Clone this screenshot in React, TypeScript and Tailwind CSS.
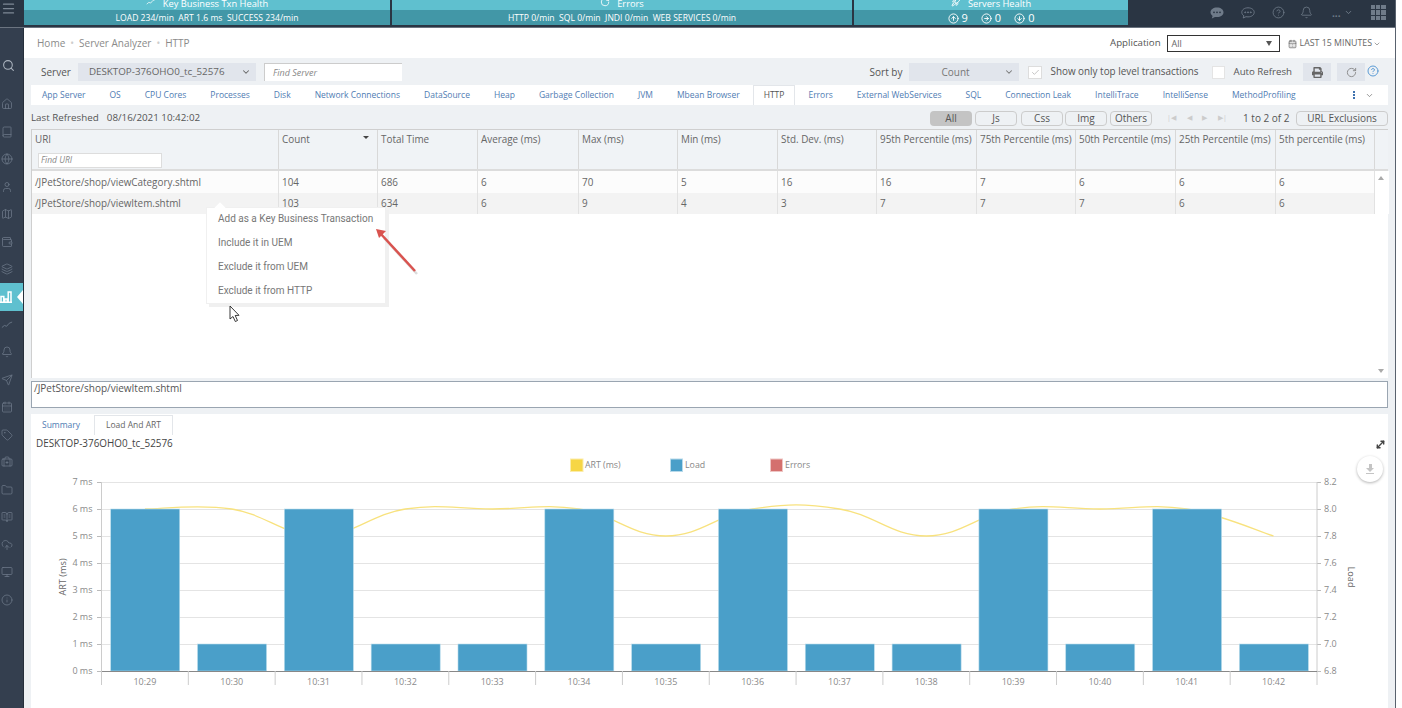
import {
  Search, House, Book, Globe, User, Map, Wallet, Layers, Bell, Send, CalendarDays, Tag,
  BriefcaseMedical, Folder, BookOpenText, CloudUpload, Monitor, Info, CircleHelp, ChevronDown,
  CircleArrowUp, CircleArrowRight, CircleArrowDown, Rocket, RotateCw, Check,
  MoveDiagonal, Menu,
} from "lucide-react";
import { FaPrint } from "react-icons/fa";

const tabs = [
  "App Server", "OS", "CPU Cores", "Processes", "Disk", "Network Connections", "DataSource", "Heap",
  "Garbage Collection", "JVM", "Mbean Browser", "HTTP", "Errors", "External WebServices", "SQL",
  "Connection Leak", "IntelliTrace", "IntelliSense", "MethodProfiling",
];

const columns = [
  "URI", "Count", "Total Time", "Average (ms)", "Max (ms)", "Min (ms)", "Std. Dev. (ms)", "95th Percentile (ms)",
  "75th Percentile (ms)", "50th Percentile (ms)", "25th Percentile (ms)", "5th percentile (ms)",
];

const rows = [
  ["/JPetStore/shop/viewCategory.shtml", "104", "686", "6", "70", "5", "16", "16", "7", "6", "6", "6"],
  ["/JPetStore/shop/viewItem.shtml", "103", "634", "6", "9", "4", "3", "7", "7", "7", "6", "6"],
];

const gridCols = "grid grid-cols-[247px_99px_100px_101px_99px_100px_99px_100px_99px_100px_100px_99px_14px]";

const times = ["10:29", "10:30", "10:31", "10:32", "10:33", "10:34", "10:35", "10:36", "10:37", "10:38", "10:39", "10:40", "10:41", "10:42"];
const load = [6, 1, 6, 1, 1, 6, 1, 6, 1, 1, 6, 1, 6, 1];
const art = [6, 6, 5, 6, 6, 6, 5, 6, 6, 5, 6, 6, 6, 5];

const plotLeft = 101.5;
const plotRight = 1317;
const catW = (plotRight - plotLeft) / 14;
const yOf = (v: number) => 671 - 27 * v;

function splinePath() {
  const pts = art.map((v, i) => [plotLeft + catW * (i + 0.5), yOf(v)]);
  let d = `M${pts[0][0]} ${pts[0][1]}`;
  for (let i = 0; i < pts.length - 1; i++) {
    const p0 = pts[Math.max(i - 1, 0)];
    const p1 = pts[i];
    const p2 = pts[i + 1];
    const p3 = pts[Math.min(i + 2, pts.length - 1)];
    d += ` C${p1[0] + (p2[0] - p0[0]) / 5} ${p1[1] + (p2[1] - p0[1]) / 5} ${p2[0] - (p3[0] - p1[0]) / 5} ${p2[1] - (p3[1] - p1[1]) / 5} ${p2[0]} ${p2[1]}`;
  }
  return d;
}

function TrendIcon({ className }: { className?: string }) {
  return (
    <svg viewBox="0 0 14 14" fill="none" stroke="currentColor" strokeWidth="1" className={className}>
      <path d="M1 10 L4 7.5 L6.5 8.5 L9.5 5 L13 3.5" />
    </svg>
  );
}

function BarsIcon() {
  return (
    <svg viewBox="0 0 12 12" className="h-[12px] w-[12px]" fill="none" stroke="white" strokeWidth="1.5">
      <path d="M1 11.2V5.5H3.8V11.2M4.8 11.2V8H7.2V11.2M8.2 11.2V1H11V11.2M0 11.2H12" />
    </svg>
  );
}

function Sidebar() {
  const icon = "h-[12px] w-[12px] text-[#6d7a8a]";
  const top = [
    <House className={icon} strokeWidth={1.5} />, <Book className={icon} strokeWidth={1.5} />, <Globe className={icon} strokeWidth={1.5} />,
    <User className={icon} strokeWidth={1.5} />, <Map className={icon} strokeWidth={1.5} />, <Wallet className={icon} strokeWidth={1.5} />,
    <Layers className={icon} strokeWidth={1.5} />,
  ];
  const bottom = [
    <TrendIcon className={icon} />, <Bell className={icon} strokeWidth={1.5} />, <Send className={icon} strokeWidth={1.5} />,
    <CalendarDays className={icon} strokeWidth={1.5} />, <Tag className={icon} strokeWidth={1.5} />, <BriefcaseMedical className={icon} strokeWidth={1.5} />,
    <Folder className={icon} strokeWidth={1.5} />, <BookOpenText className={icon} strokeWidth={1.5} />, <CloudUpload className={icon} strokeWidth={1.5} />,
    <Monitor className={icon} strokeWidth={1.5} />, <Info className={icon} strokeWidth={1.5} />,
  ];
  return (
    <div className="flex w-[24px] shrink-0 flex-col border-r border-[#262f3b] bg-[#343f4f] pt-[24px]">
      <div className="mb-[11px] flex h-[27.5px] items-center justify-center pr-[6px]">
        <Search className="h-[13px] w-[13px] text-[#aab3be]" />
      </div>
      {top.map((el, i) => (
        <div key={i} className="flex h-[27.5px] items-center justify-center pr-[9px]">{el}</div>
      ))}
      <div className="relative flex h-[28px] items-center justify-center bg-[#5fc0cf] pr-[11px]">
        <BarsIcon />
        <div className="absolute right-0 top-[7px] h-0 w-0 border-y-[7px] border-r-[6px] border-y-transparent border-r-white" />
      </div>
      {bottom.map((el, i) => (
        <div key={i} className="flex h-[27.5px] items-center justify-center pr-[9px]">{el}</div>
      ))}
    </div>
  );
}

function HealthCard({ width, title, icon, children }: { width: string; title: string; icon: React.ReactNode; children: React.ReactNode }) {
  return (
    <div className={`${width} h-[25px] shrink-0 overflow-hidden text-white`}>
      <div className="flex h-[10px] items-start justify-center gap-[7px] bg-[#5fc0cf] text-[9.3px] leading-[7px]">
        {icon}
        <span>{title}</span>
      </div>
      <div className="flex h-[15px] items-center justify-center bg-[#4297a7] pt-[1px] text-[8.6px]">{children}</div>
    </div>
  );
}

function TopBar() {
  return (
    <div className="flex h-[28px] shrink-0 border-b border-[#6b7480] bg-[#2a3543]">
      <div className="flex w-[24px] shrink-0 items-start pl-[1px] pt-[1px]">
        <Menu className="h-[15px] w-[15px] text-[#7d8895]" />
      </div>
      <div className="flex gap-[2px]">
        <HealthCard width="w-[366px]" title="Key Business Txn Health" icon={<TrendIcon className="-mt-[3px] h-[10px] w-[10px]" />}>
          <span>LOAD 234/min&nbsp; ART 1.6 ms&nbsp; SUCCESS 234/min</span>
        </HealthCard>
        <HealthCard width="w-[460px]" title="Errors" icon={<RotateCw className="-mt-[3px] h-[10px] w-[10px]" />}>
          <span>HTTP 0/min&nbsp; SQL 0/min&nbsp; JNDI 0/min&nbsp; WEB SERVICES 0/min</span>
        </HealthCard>
        <HealthCard width="w-[274px]" title="Servers Health" icon={<Rocket className="-mt-[3px] h-[10px] w-[10px]" />}>
          <div className="flex items-center gap-[13px] text-[11px]">
            <span className="flex items-center gap-[3px]"><CircleArrowUp className="h-[11px] w-[11px]" />9</span>
            <span className="flex items-center gap-[3px]"><CircleArrowRight className="h-[11px] w-[11px]" />0</span>
            <span className="flex items-center gap-[3px]"><CircleArrowDown className="h-[11px] w-[11px]" />0</span>
          </div>
        </HealthCard>
      </div>
      <div className="flex flex-1 items-center pb-[2px] pl-[82px] text-[#6f7b89]">
        <svg viewBox="0 0 14 12" className="h-[12px] w-[14px]">
          <path d="M7 0.5C3.2 0.5 0.5 2.6 0.5 5.3 0.5 6.8 1.3 8 2.6 8.9L1.8 11.4 5 9.9C5.6 10 6.3 10.1 7 10.1 10.8 10.1 13.5 8 13.5 5.3 13.5 2.6 10.8 0.5 7 0.5Z" fill="currentColor" />
          <circle cx="4" cy="5.3" r="0.9" fill="#2a3543" /><circle cx="7" cy="5.3" r="0.9" fill="#2a3543" /><circle cx="10" cy="5.3" r="0.9" fill="#2a3543" />
        </svg>
        <svg viewBox="0 0 14 12" className="ml-[17px] h-[12px] w-[14px]" fill="none" stroke="currentColor" strokeWidth="0.9">
          <path d="M7 0.8C3.4 0.8 0.8 2.8 0.8 5.3 0.8 6.8 1.6 8 2.9 8.8L2.2 11 5 9.7C5.6 9.8 6.3 9.9 7 9.9 10.6 9.9 13.2 7.9 13.2 5.3 13.2 2.8 10.6 0.8 7 0.8Z" />
          <circle cx="4.2" cy="5.3" r="0.5" fill="currentColor" /><circle cx="7" cy="5.3" r="0.5" fill="currentColor" /><circle cx="9.8" cy="5.3" r="0.5" fill="currentColor" />
        </svg>
        <CircleHelp className="ml-[17px] h-[13px] w-[13px]" strokeWidth={1.5} />
        <Bell className="ml-[15px] h-[13px] w-[13px]" strokeWidth={1.5} />
        <span className="ml-[19px] text-[10px] font-bold leading-none">...</span>
        <ChevronDown className="ml-[3px] h-[9px] w-[9px]" strokeWidth={2.5} />
        <div className="ml-[18px] grid h-[15px] w-[15px] grid-cols-3 gap-[1px]">
          {Array.from({ length: 9 }).map((_, i) => (
            <div key={i} className="bg-[#6f7b89]" />
          ))}
        </div>
      </div>
    </div>
  );
}

function Toolbar() {
  return (
    <div className="flex h-[27px] shrink-0 items-center pl-[17px] pr-[16px] pt-[1px] text-[10px] text-[#555]">
      <span>Server</span>
      <div className="ml-[7px] flex h-[18px] w-[178px] items-center justify-between bg-[#e1e5ec] pl-[11px] pr-[5px] text-[9.8px] text-[#666]">
        <span>DESKTOP-376OHO0_tc_52576</span>
        <ChevronDown className="h-[10px] w-[10px]" strokeWidth={2.5} />
      </div>
      <div className="ml-[8px] flex h-[18px] w-[138px] items-center border-l border-t border-[#ccc] bg-white pl-[8px] text-[9px] italic text-[#888]">
        Find Server
      </div>
      <span className="ml-auto">Sort by</span>
      <div className="ml-[7px] flex h-[18px] w-[110px] items-center justify-between bg-[#e1e5ec] pl-[32px] pr-[5px] text-[#777]">
        <span>Count</span>
        <ChevronDown className="h-[10px] w-[10px]" strokeWidth={2.5} />
      </div>
      <div className="ml-[9px] flex h-[13px] w-[14px] items-center justify-center border border-[#ddd] bg-white">
        <Check className="h-[9px] w-[9px] text-[#999]" strokeWidth={1.5} />
      </div>
      <span className="mb-[2px] ml-[8px] text-[9.9px]">Show only top level transactions</span>
      <div className="ml-[13px] h-[13px] w-[13px] border border-[#e4e4e4] bg-white" />
      <span className="ml-[9px] text-[9.7px]">Auto Refresh</span>
      <div className="ml-[11px] flex h-[18px] w-[28px] items-center justify-center bg-[#e1e5ec]">
        <FaPrint className="h-[11px] w-[11px] text-[#666]" />
      </div>
      <div className="ml-[6px] flex h-[18px] w-[28px] items-center justify-center bg-[#e1e5ec]">
        <RotateCw className="h-[11px] w-[11px] text-[#888]" />
      </div>
      <CircleHelp className="mb-[2px] ml-[2px] h-[12px] w-[12px] text-[#5b9bd5]" />
    </div>
  );
}

function TabBar() {
  return (
    <div className="flex h-[20px] shrink-0 items-stretch whitespace-nowrap bg-white pr-[14px] text-[8.5px] text-[#4f7cb3]">
      {tabs.map((t) => (
        <div
          key={t}
          className={
            t === "HTTP"
              ? "mr-[2px] flex items-center border-x border-t border-[#e3e6ea] px-[10px] text-[#555]"
              : "mr-[2px] flex items-center px-[11px]"
          }
        >
          {t}
        </div>
      ))}
      <div className="ml-auto flex items-center">
        <div className="flex flex-col gap-[1px]">
          <div className="h-[2px] w-[2px] bg-[#3f72af]" />
          <div className="h-[2px] w-[2px] bg-[#3f72af]" />
          <div className="h-[2px] w-[2px] bg-[#3f72af]" />
        </div>
        <ChevronDown className="ml-[10px] h-[9px] w-[9px] text-[#777]" />
      </div>
    </div>
  );
}

function FilterRow() {
  const pill = "flex h-[15px] w-[42px] items-center justify-center rounded-[4px] border border-[#ccc] text-[#555]";
  return (
    <div className="flex h-[24px] shrink-0 items-center pt-[2px] text-[10px] text-[#555]">
      <span className="text-[9.8px]">Last Refreshed</span>
      <span className="ml-[8px] text-[9.8px]">08/16/2021 10:42:02</span>
      <div className="ml-auto flex items-center">
        <div className="flex h-[15px] w-[42px] items-center justify-center rounded-[4px] bg-[#c4c4c4] text-[#555]">All</div>
        <div className={`${pill} ml-[3px]`}>Js</div>
        <div className={`${pill} ml-[4px]`}>Css</div>
        <div className={`${pill} ml-[2px]`}>Img</div>
        <div className={`${pill} ml-[3px]`}>Others</div>
      </div>
      <div className="ml-[15px] flex w-[60px] items-center justify-between text-[#ccc]">
        <span className="text-[7px]">|◀</span>
        <span className="text-[7px]">◀</span>
        <span className="text-[7px]">▶</span>
        <span className="text-[7px]">▶|</span>
      </div>
      <span className="ml-[16px] w-[46px] whitespace-nowrap">1 to 2 of 2</span>
      <div className="ml-[7px] flex h-[15px] w-[92px] items-center justify-center rounded-[4px] border border-[#ccc]">URL Exclusions</div>
    </div>
  );
}

function ContextMenu() {
  const items = ["Add as a Key Business Transaction", "Include it in UEM", "Exclude it from UEM", "Exclude it from HTTP"];
  return (
    <div className="absolute left-[174px] top-[36px] w-[180px] border border-[#f0f0f0] bg-white font-['Roboto',sans-serif] text-[10px] text-[#777] shadow-[3px_3px_0_#f0f0f0]">
      <div className="absolute -top-[4px] left-[9px] h-[8px] w-[8px] rotate-45 bg-white" />
      {items.map((item) => (
        <div key={item} className="relative flex h-[23.8px] items-center pb-[2px] pl-[11px]">{item}</div>
      ))}
    </div>
  );
}

function UriTable() {
  return (
    <div className="flex h-[249px] shrink-0 flex-col border-l border-t border-[#cfcfcf] bg-white text-[9.9px] text-[#666]">
      <div className={`${gridCols} h-[41px] shrink-0 border-b-2 border-[#dcdcdc] bg-[#f0f3f6]`}>
        {columns.map((c, i) => (
          <div key={c} className="whitespace-nowrap border-r border-[#d8d8d8] pl-[3px] pt-[2px]">
            <div className="relative">
              {c}
              {c === "Count" && <span className="absolute right-[8px] top-[4px] h-0 w-0 border-x-[3.5px] border-t-[3.5px] border-x-transparent border-t-[#444]" />}
            </div>
            {i === 0 && (
              <div className="ml-[3px] mt-[6px] flex h-[15px] w-[124px] items-center border border-[#ddd] bg-white pl-[2px] text-[8.5px] italic text-[#888]">
                Find URI
              </div>
            )}
          </div>
        ))}
        <div />
      </div>
      <div className="relative flex-1">
        {rows.map((r, ri) => (
          <div key={r[0]} className={`${gridCols} ${ri === 0 ? "h-[22px] bg-[#fcfcfc]" : "h-[21px] bg-[#f3f3f3]"}`}>
            {r.map((v, i) => (
              <div key={i} className="flex items-center border-r border-[#e2e2e2] pl-[3px]">{v}</div>
            ))}
            <div className="bg-white" />
          </div>
        ))}
        <ContextMenu />
        <span className="absolute right-[4px] top-[5px] h-0 w-0 border-x-[3.5px] border-b-[4px] border-x-transparent border-b-[#aaa]" />
        <span className="absolute bottom-[5px] right-[4px] h-0 w-0 border-x-[3.5px] border-t-[4px] border-x-transparent border-t-[#aaa]" />
        <svg className="absolute left-[197px] top-[134px] h-[20px] w-[14px]" viewBox="0 0 14 20">
          <path d="M1 1 L1 14 L4 11.5 L6.3 16.5 L8.5 15.5 L6.2 10.5 L10 10.3 Z" fill="white" stroke="#222" strokeWidth="0.9" />
        </svg>
        <svg className="absolute left-[338px] top-[49px] h-[60px] w-[60px]" viewBox="0 0 60 60">
          <path d="M45 52 L12 16" stroke="#dcdcdc" strokeWidth="2.5" transform="translate(2 2)" />
          <path d="M45 51 L10 13" stroke="#d9534f" strokeWidth="2.5" />
          <path d="M6 9 L16 11 L9 18 Z" fill="#d9534f" />
        </svg>
      </div>
    </div>
  );
}

function Chart() {
  const grid = [0, 1, 2, 3, 4, 5, 6, 7];
  const right = ["6.8", "7.0", "7.2", "7.4", "7.6", "7.8", "8.0", "8.2"];
  return (
    <svg viewBox="31 450 1357 258" className="block h-[258px] w-[1357px] shrink-0" fontSize="9" fill="#8a8a8a">
      <rect x="570.5" y="459" width="12.5" height="12.5" fill="#f6d645" stroke="#fbecaa" />
      <text x="585" y="468" fontSize="8.8" fill="#888">ART (ms)</text>
      <rect x="670.5" y="459" width="12" height="12.5" fill="#4a9fc9" stroke="#b7d9ea" />
      <text x="685" y="468" fontSize="8.8" fill="#888">Load</text>
      <rect x="770.5" y="459" width="12" height="12.5" fill="#d4706e" stroke="#eec5c4" />
      <text x="785" y="468" fontSize="8.8" fill="#888">Errors</text>

      {grid.map((g) => (
        <g key={g}>
          {g > 0 && <line x1={plotLeft} x2={plotRight} y1={yOf(g) + 0.5} y2={yOf(g) + 0.5} stroke="#e4e4e4" />}
          <line x1="97" x2={plotLeft} y1={yOf(g) + 0.5} y2={yOf(g) + 0.5} stroke="#bbb" />
          <line x1={plotRight} x2="1321" y1={yOf(g) + 0.5} y2={yOf(g) + 0.5} stroke="#bbb" />
          <text x="92.5" y={yOf(g) + 3} textAnchor="end">{g} ms</text>
          <text x="1324" y={yOf(g) + 3}>{right[g]}</text>
        </g>
      ))}
      <line x1={plotLeft} x2={plotLeft} y1="482" y2="685" stroke="#ccc" />
      <line x1={plotRight} x2={plotRight} y1="482" y2="685" stroke="#ccc" />
      <path d={splinePath()} fill="none" stroke="#f8e27e" strokeWidth="1.3" />
      {load.map((v, i) => (
        <rect
          key={i}
          x={plotLeft + catW * i + 9.2}
          y={yOf(v)}
          width={catW - 17.8}
          height={27 * v}
          fill="#4a9fc9"
          stroke="#b9dcec"
          strokeWidth="0.6"
        />
      ))}
      <line x1={plotLeft} x2={plotRight} y1="671.5" y2="671.5" stroke="#888" />
      {times.map((t, i) => (
        <g key={t}>
          <line x1={plotLeft + catW * i} x2={plotLeft + catW * i} y1="671" y2="685" stroke="#ccc" />
          <text x={plotLeft + catW * (i + 0.5)} y="684.5" textAnchor="middle">{t}</text>
        </g>
      ))}
      <text transform="translate(66 577) rotate(-90)" textAnchor="middle" fontSize="9.2" fill="#666">ART (ms)</text>
      <text transform="translate(1348 577) rotate(90)" textAnchor="middle" fontSize="9.2" fill="#666">Load</text>
    </svg>
  );
}

function BottomPanel() {
  return (
    <div className="relative flex min-h-0 flex-1 flex-col bg-white text-[9.9px]">
      <div className="flex h-[21px] shrink-0 items-stretch pt-[1px] text-[8.5px]">
        <div className="flex w-[63px] items-center pl-[11px] text-[#4f7cb3]">Summary</div>
        <div className="flex w-[79px] items-center justify-center border-x border-t border-[#e3e6ea] text-[#666]">Load And ART</div>
      </div>
      <div className="flex h-[15px] shrink-0 items-center pl-[5px] pt-[1px] text-[#444]">DESKTOP-376OHO0_tc_52576</div>
      <Chart />
      <MoveDiagonal className="absolute right-[2px] top-[25px] h-[11px] w-[11px] text-[#444]" strokeWidth={3} />
      <div className="absolute right-[5px] top-[42px] flex h-[26px] w-[26px] flex-col items-center justify-center rounded-full bg-white shadow-[0_1px_3px_rgba(0,0,0,0.3)]">
        <span className="h-[4px] w-[3px] bg-[#c4c4c4]" />
        <span className="h-0 w-0 border-x-[4px] border-t-[4px] border-x-transparent border-t-[#c4c4c4]" />
        <span className="mt-[1.5px] h-[1px] w-[8px] bg-[#c4c4c4]" />
      </div>
    </div>
  );
}

export default function App() {
  return (
    <div className="flex h-[708px] w-[1402px] overflow-hidden bg-white font-['Open_Sans',sans-serif]">
      <div className="flex w-[1396px] shrink-0 flex-col border-r border-[#59626e]">
        <TopBar />
        <div className="flex min-h-0 flex-1">
          <Sidebar />
          <div className="flex min-w-0 flex-1 flex-col bg-[#eef1f4]">
            <div className="flex h-[30px] shrink-0 items-center bg-white pl-[13px] pr-[14px] pt-[1px] text-[10px] text-[#8a8a8a]">
              <span>Home</span>
              <span className="mx-[5px] text-[#ccc]">•</span>
              <span>Server Analyzer</span>
              <span className="mx-[5px] text-[#ccc]">•</span>
              <span>HTTP</span>
              <span className="ml-auto text-[9.7px] text-[#555]">Application</span>
              <div className="ml-[6px] flex h-[17px] w-[113px] items-center justify-between border border-[#333] pl-[4px] pr-[7px] text-[9px] text-[#666]">
                <span>All</span>
                <span className="h-0 w-0 border-x-[3.5px] border-t-[5px] border-x-transparent border-t-[#555]" />
              </div>
              <CalendarDays className="ml-[8px] h-[10px] w-[9px] text-[#666]" />
              <span className="ml-[3px] text-[8.8px] text-[#666]">LAST 15 MINUTES</span>
              <ChevronDown className="ml-[1px] h-[8px] w-[8px] text-[#777]" />
            </div>
            <Toolbar />
            <div className="flex min-h-0 flex-1 flex-col px-[7px]">
              <TabBar />
              <FilterRow />
              <UriTable />
              <div className="mt-[3px] h-[27px] shrink-0 border border-[#9aa5b1] bg-white pl-[2px] text-[10px] leading-[12px] text-[#555]">
                /JPetStore/shop/viewItem.shtml
              </div>
              <div className="h-[6px] shrink-0" />
              <BottomPanel />
            </div>
          </div>
        </div>
      </div>
    </div>
  );
}
